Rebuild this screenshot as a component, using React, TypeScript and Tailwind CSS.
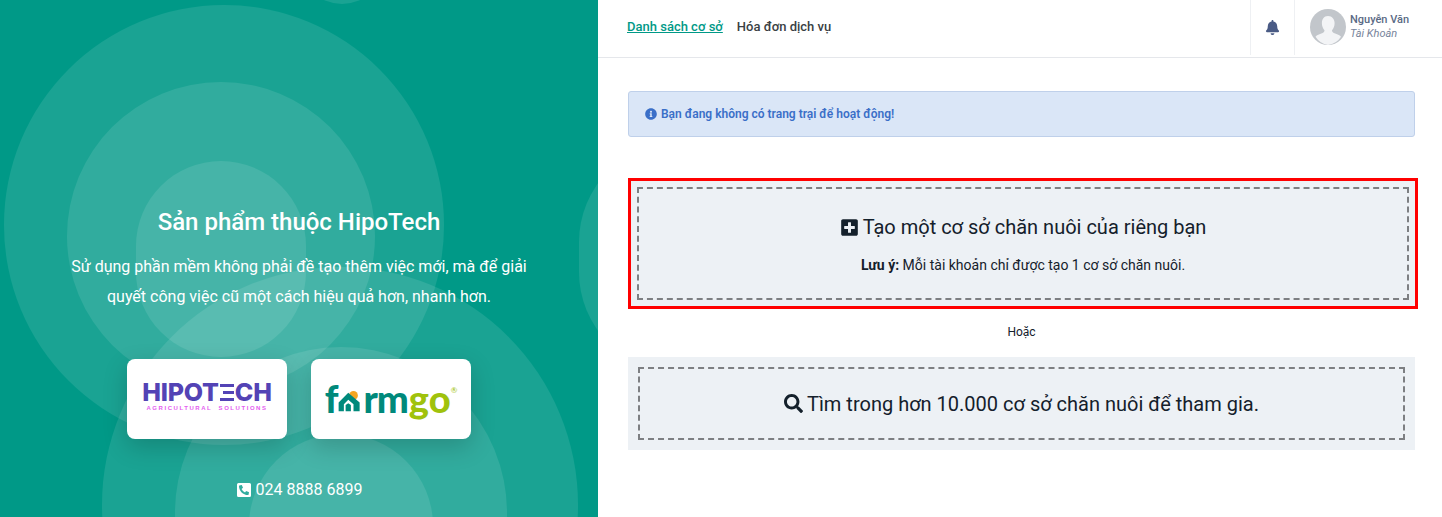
import { FaBell, FaInfoCircle, FaPhoneSquareAlt, FaPlusSquare, FaSearch } from "react-icons/fa";

const RINGS = [
  "left-[4px] top-[5px] h-[440px] w-[440px]",
  "left-[67px] top-[82px] h-[308px] w-[308px]",
  "left-[136px] top-[161px] h-[196px] w-[170px]",
  "left-[102px] top-[267px] h-[476px] w-[476px]",
  "left-[175px] top-[347px] h-[332px] w-[332px]",
  "left-[249px] top-[434px] h-[184px] w-[184px]",
  "left-[579px] top-[142px] h-[230px] w-[200px]",
  "left-[-196px] top-[490px] h-[200px] w-[200px]",
  "left-[300px] top-[-80px] h-[84px] w-[84px]",
];

function HipotechLogo() {
  return (
    <div className="flex w-[124px] flex-col items-center">
      <div className="flex items-center font-['Inter',sans-serif] text-[25px] leading-[24px] font-extrabold tracking-[-0.2px] text-[#5343b5]">
        <span>HIPOT</span>
        <span className="mx-[1px] flex h-[17px] w-[14px] flex-col justify-between">
          <i className="h-[3px] bg-[#5343b5]" />
          <i className="ml-[3px] h-[3px] bg-[#5343b5]" />
          <i className="h-[3px] bg-[#5343b5]" />
        </span>
        <span>CH</span>
      </div>
      <div className="mt-[1px] font-['Liberation_Sans',sans-serif] text-[6px] leading-[7px] font-bold tracking-[1.55px] whitespace-pre text-[#e55cf0]">
        AGRICULTURAL  SOLUTIONS
      </div>
    </div>
  );
}

function FarmgoLogo() {
  return (
    <div className="flex items-start font-['Lato',sans-serif] text-[38px] leading-[38px] font-black">
      <span className="text-[#00897b]">f</span>
      <svg viewBox="0 0 26 24" className="mt-[12px] h-[21px] w-[24px]">
        <circle cx="17" cy="5" r="5" fill="#f5a623" />
        <path d="M0 23V13L11 2l13 11v10h-7v-8l-6-5-5 5v8z" fill="#00897b" />
        <path d="M8 23v-7l3-2 3 2v7z" fill="#00897b" />
      </svg>
      <span className="ml-[1px] tracking-[-1px] text-[#00897b]">rm</span>
      <span className="ml-[1px] text-[#a0c20c]">go</span>
      <span className="mt-[7px] text-[8px] leading-[8px] font-normal text-[#a0c20c]">®</span>
    </div>
  );
}

function Avatar() {
  return (
    <svg viewBox="0 0 36 36" className="h-9 w-9 shrink-0">
      <circle cx="18" cy="18" r="18" fill="#c2c6cb" />
      <path
        d="M18 7c4.2 0 6.6 3.3 6.6 7.2 0 3-1.2 5.4-2.6 7 0 1.6.8 2.3 2.5 3 2.7 1 5 1.6 6.5 3.6A18 18 0 0 1 18 36 18 18 0 0 1 5.500 27.800c1.500-2 3.800-2.600 6.500-3.600 1.700-.7 2.500-1.400 2.500-3-1.400-1.600-2.600-4-2.600-7C11.900 10.300 13.800 7 18 7z"
        fill="#f3f4f6"
      />
    </svg>
  );
}

export default function App() {
  return (
    <div className="flex h-[517px] w-[1442px] overflow-hidden bg-white font-['Roboto',sans-serif]">
      <aside className="relative flex w-[598px] shrink-0 flex-col items-center overflow-hidden bg-[#009987] pt-[205px] text-white">
        {RINGS.map((ring) => (
          <div key={ring} className={`absolute rounded-full bg-white/10 ${ring}`} />
        ))}
        <div className="relative flex flex-col items-center">
          <h1 className="text-2xl leading-[34px] font-medium">Sản phẩm thuộc HipoTech</h1>
          <p className="mt-[13px] w-[470px] text-center text-base leading-[30px]">
            Sử dụng phần mềm không phải đề tạo thêm việc mới, mà để giải quyết công việc cũ một cách
            hiệu quả hơn, nhanh hơn.
          </p>
          <div className="mt-[47px] flex gap-6">
            <div className="flex h-20 w-40 items-center justify-center rounded-lg bg-white pb-[6px] shadow-[0_8px_24px_rgba(0,0,0,0.18)]">
              <HipotechLogo />
            </div>
            <div className="flex h-20 w-40 items-center justify-center rounded-lg bg-white pb-[3px] shadow-[0_8px_24px_rgba(0,0,0,0.18)]">
              <FarmgoLogo />
            </div>
          </div>
          <div className="mt-[40px] flex items-center gap-[4px] text-base leading-[22px]">
            <FaPhoneSquareAlt className="size-[16px]" />
            <span>024 8888 6899</span>
          </div>
        </div>
      </aside>

      <main className="flex min-w-0 flex-1 flex-col">
        <header className="flex h-[58px] items-start border-b border-[#e5e7eb]">
          <nav className="flex flex-1 items-center gap-[14px] pt-[18px] pl-[29px] text-[13px] leading-[18px] font-medium">
            <a className="text-[#009987] underline">Danh sách cơ sở</a>
            <a className="text-[#3a3f44]">Hóa đơn dịch vụ</a>
          </nav>
          <div className="flex h-[55px] w-[45px] items-center justify-center border-x border-[#eef0f3]">
            <FaBell className="size-[15px] text-[#4a5b85]" />
          </div>
          <div className="flex w-[147px] items-center gap-[4px] pt-[9px] pl-[15px]">
            <Avatar />
            <div className="flex flex-col text-[11px] leading-[14px]">
              <span className="font-medium text-[#5a6a85]">Nguyễn Văn</span>
              <span className="text-[#77849b] italic">Tài Khoản</span>
            </div>
          </div>
        </header>

        <div className="flex flex-col pt-[33px] pr-[27px] pl-[30px]">
          <div className="flex h-[46px] items-center gap-[4px] rounded-[3px] border border-[#bfd0ea] bg-[#dae6f7] pl-[16px] text-xs font-semibold text-[#3a6fc8]">
            <FaInfoCircle className="size-3" />
            <span>Bạn đang không có trang trại để hoạt động!</span>
          </div>

          <div className="mt-[41px] -mr-[3px] border-[3px] border-[#ff0000] bg-[#edf1f5] p-[6px]">
            <div className="flex h-[113px] flex-col items-center border-2 border-dashed border-[#7d7f82] pt-[24px] text-[#14202b]">
              <div className="flex items-center gap-[4px] text-xl leading-[28px]">
                <FaPlusSquare className="size-[19px]" />
                <span>Tạo một cơ sở chăn nuôi của riêng bạn</span>
              </div>
              <p className="mt-[14px] text-sm leading-[20px]">
                <b className="font-bold">Lưu ý:</b> Mỗi tài khoản chỉ được tạo 1 cơ sở chăn nuôi.
              </p>
            </div>
          </div>

          <p className="mt-[15px] text-center text-xs leading-[16px] text-[#14202b]">Hoặc</p>

          <div className="mt-[17px] bg-[#edf1f5] px-[10px] py-[10px]">
            <div className="flex h-[73px] items-center justify-center gap-[4px] border-2 border-dashed border-[#7d7f82] text-xl text-[#14202b]">
              <FaSearch className="size-[19px]" />
              <span>Tìm trong hơn 10.000 cơ sở chăn nuôi để tham gia.</span>
            </div>
          </div>
        </div>
      </main>
    </div>
  );
}
